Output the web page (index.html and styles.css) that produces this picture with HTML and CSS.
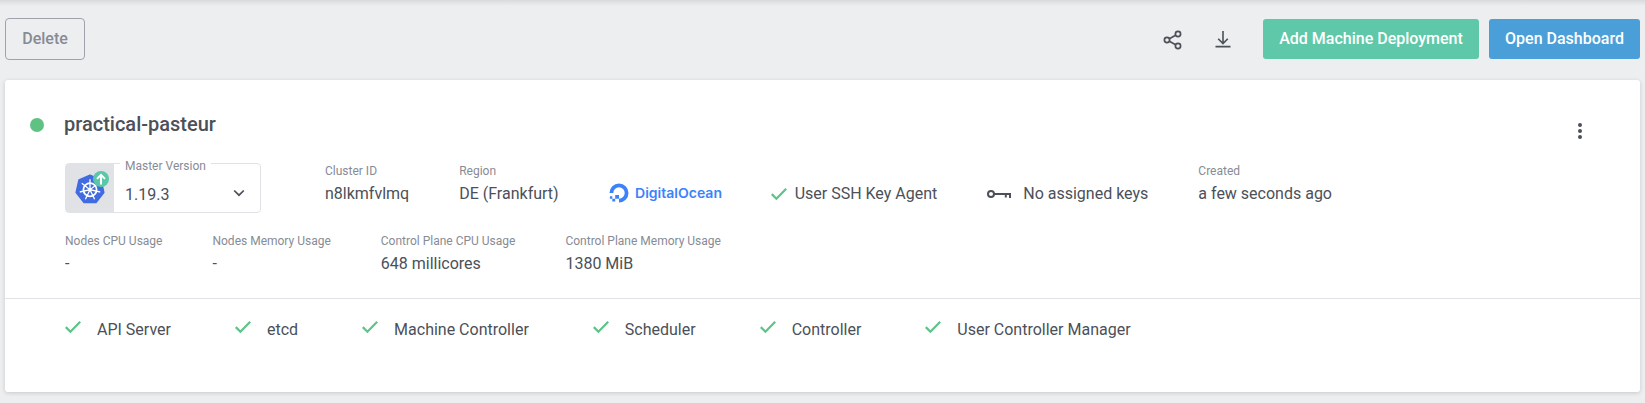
FILE: index.html
```html
<!DOCTYPE html>
<html lang="en">
<head>
<meta charset="utf-8">
<title>practical-pasteur</title>
<link rel="stylesheet" href="styles.css">
</head>
<body>
<svg class="defs" width="0" height="0"><symbol id="check" viewBox="0 0 16 14"><path d="M.8 7.1 5.4 11.7 15.2 1.8" fill="none" stroke="#5cc489" stroke-width="2.2"/></symbol></svg>
<header class="toolbar">
  <button class="btn btn-outline">Delete</button>
  <div class="actions">
    <svg class="share" viewBox="0 0 20 20" fill="none" stroke="#4b5059" stroke-width="1.7"><circle cx="15" cy="4" r="2.6"/><circle cx="4" cy="10" r="2.6"/><circle cx="15" cy="16" r="2.6"/><path d="M6.4 8.8 12.6 5.3M6.4 11.2 12.6 14.7"/></svg>
    <svg class="download" viewBox="0 0 16 18" fill="none" stroke="#4b5059" stroke-width="1.6"><path d="M8 1V13M3.2 8.8 8 13.6 12.8 8.8M.5 16.6H15.5"/></svg>
    <button class="btn btn-green">Add Machine Deployment</button>
    <button class="btn btn-blue">Open Dashboard</button>
  </div>
</header>
<main class="card">
  <div class="title-row">
    <span class="status"></span>
    <h1>practical-pasteur</h1>
    <svg class="more" viewBox="0 0 4 16" fill="#4b5059"><circle cx="2" cy="2" r="2"/><circle cx="2" cy="8" r="2"/><circle cx="2" cy="14" r="2"/></svg>
  </div>
  <section class="row props">
    <div class="version">
      <div class="version-icon">
        <svg viewBox="0 0 36 34"><path d="M15 4.2 26 9 28.8 21.5 21 31.5H9L1.2 21.5 4 9Z" fill="#416be0" stroke="#416be0" stroke-width="1.5" stroke-linejoin="round"/><g fill="none" stroke="#fff"><circle cx="15" cy="18.7" r="6.6" stroke-width="1.7"/><path stroke-width="1.3" d="M15 8.2V18.7L23.2 12.2M15 18.7 25.2 21M15 18.7 19.6 28.2M15 18.7 10.4 28.2M15 18.7 4.8 21M15 18.7 6.8 12.2"/></g><circle cx="15" cy="18.7" r="1.7" fill="#fff"/><circle cx="26" cy="8" r="8" fill="#5ac8a8"/><path d="M26 13.5V3.8M22 7.9 26 3.9 30 7.9" stroke="#fff" stroke-width="2" fill="none"/></svg>
      </div>
      <div class="version-value"><span>1.19.3</span><svg class="chevron" viewBox="0 0 12 8"><path d="M1.2 1.5 6 6.2 10.8 1.5" fill="none" stroke="#4b5059" stroke-width="1.7"/></svg></div>
      <span class="legend">Master Version</span>
    </div>
    <div class="prop"><label>Cluster ID</label><span>n8lkmfvlmq</span></div>
    <div class="prop"><label>Region</label><span>DE (Frankfurt)</span></div>
    <div class="inline ocean">
      <svg viewBox="0 0 20 20" fill="#3b82fb"><path d="M10 19.5V15.7A5.7 5.7 0 1 0 4.3 10H.5A9.5 9.5 0 1 1 10 19.5Z"/><path d="M6.2 12H10V15.7H6.2ZM3.3 15.7H6.2V18.6H3.3ZM.9 13.3H3.3V15.7H.9Z"/></svg>
      <svg class="wordmark" viewBox="0 0 88 20"><text x="0" y="14.5" textLength="87" lengthAdjust="spacingAndGlyphs">DigitalOcean</text></svg>
    </div>
    <div class="inline agent"><svg class="check"><use href="#check"/></svg><span>User SSH Key Agent</span></div>
    <div class="inline keys"><svg viewBox="0 0 24 10" fill="none" stroke="#4b5059" stroke-width="2"><circle cx="4" cy="5" r="3"/><path d="M7 5H24M23 5V9M18.8 5V8.5"/></svg><span>No assigned keys</span></div>
    <div class="prop"><label>Created</label><span>a few seconds ago</span></div>
  </section>
  <section class="row usage">
    <div class="prop"><label>Nodes CPU Usage</label><span>-</span></div>
    <div class="prop"><label>Nodes Memory Usage</label><span>-</span></div>
    <div class="prop"><label>Control Plane CPU Usage</label><span>648 millicores</span></div>
    <div class="prop"><label>Control Plane Memory Usage</label><span>1380 MiB</span></div>
  </section>
  <section class="health">
    <div><svg class="check"><use href="#check"/></svg><span>API Server</span></div>
    <div><svg class="check"><use href="#check"/></svg><span>etcd</span></div>
    <div><svg class="check"><use href="#check"/></svg><span>Machine Controller</span></div>
    <div><svg class="check"><use href="#check"/></svg><span>Scheduler</span></div>
    <div><svg class="check"><use href="#check"/></svg><span>Controller</span></div>
    <div><svg class="check"><use href="#check"/></svg><span>User Controller Manager</span></div>
  </section>
</main>
</body>
</html>
```
FILE: styles.css
```css
* { box-sizing: border-box; }
body { margin: 0; height: 403px; overflow: hidden; padding: 18px 5px 0; font: 16px/24px Roboto, sans-serif; color: #4b5059; background: linear-gradient(#d9dadc, #edeef0 6px); }
.defs { display: none; }
svg { display: block; flex: none; }
.toolbar { display: flex; justify-content: space-between; height: 62px; align-items: flex-start; }
.btn { font: 500 16px/24px Roboto, sans-serif; border: 0; border-radius: 3px; padding: 0 16px; height: 40px; white-space: nowrap; }
.btn-outline { height: 42px; width: 80px; border: 1px solid #a0a3ae; border-radius: 4px; color: #878b95; background: transparent; }
.btn-green { width: 216px; color: #fff; background: #5ec8a9; margin: 1px 10px 0 0; }
.btn-blue { width: 151px; color: #fff; background: #4a9fd8; margin-top: 1px; }
.actions { display: flex; }
.share { width: 20px; height: 20px; margin: 12px 32px 0 0; }
.download { width: 16px; height: 18px; margin: 12px 32px 0 0; }
.card { height: 312px; background: #fff; border-radius: 3px; box-shadow: 0 1px 4px rgba(0, 0, 0, .16); }
.title-row { display: flex; align-items: flex-start; padding: 32px 58px 0 25px; height: 82px; }
.status { width: 14px; height: 14px; border-radius: 50%; background: #5fc283; margin: 6px 20px 0 0; }
h1 { font-size: 20px; line-height: 24px; font-weight: 500; margin: 0; }
.more { width: 4px; height: 16px; margin: 11px 0 0 auto; }
.row { display: flex; gap: 50px; padding-left: 60px; }
.props { height: 70px; }
.version { position: relative; display: flex; width: 196px; height: 50px; margin: 1px 14px 0 0; border: 1px solid #e1e2e5; border-radius: 4px; }
.version-icon { width: 48px; background: #e1e2e5; padding: 7px 0 0 9px; }
.version-icon svg { width: 36px; height: 34px; }
.version-value { flex: 1; display: flex; justify-content: space-between; padding: 19px 15px 0 11px; }
.chevron { width: 12px; height: 8px; margin-top: 6px; }
.legend { position: absolute; left: 54px; top: -5px; padding: 0 5px; background: #fff; font-size: 12px; line-height: 14px; color: #878b95; }
.prop { display: flex; flex-direction: column; white-space: nowrap; }
.prop label { font-size: 12px; line-height: 18px; color: #878b95; }
.prop span { line-height: 28px; }
.inline { display: flex; align-items: flex-start; padding-top: 20px; white-space: nowrap; }
.ocean { width: 113px; gap: 6px; }
.ocean svg { width: 20px; height: 20px; margin: 1px 0 0; }
.ocean .wordmark { width: 88px; }
.wordmark text { font: 600 13.5px Inter, sans-serif; fill: #3b82fb; }
.check { width: 16px; height: 14px; }
.agent { gap: 8px; }
.agent .check { margin: 5px 0 0 -1px; }
.keys { gap: 12px; }
.keys svg { width: 24px; height: 10px; margin-top: 7px; }
.usage { height: 66px; }
.health { border-top: 1px solid #e1e2e5; display: flex; gap: 64px; padding: 19px 0 0 60px; }
.health div { display: flex; gap: 16px; }
.health .check { margin-top: 2px; }
```
